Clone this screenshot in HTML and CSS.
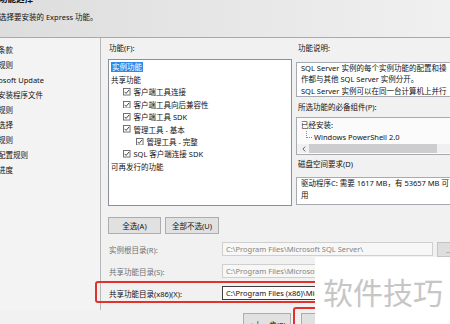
FILE: index.html
```html
<!DOCTYPE html>
<html lang="zh-CN">
<head>
<meta charset="utf-8">
<title>功能选择</title>
<link rel="stylesheet" href="styles.css">
</head>
<body>
<div class="window">
  <header class="head">
    <div class="title">功能选择</div>
    <div class="subtitle">选择要安装的 Express 功能。</div>
  </header>
  <div class="main">
    <nav class="steps">
      <div class="step">许可条款</div>
      <div class="step">全局规则</div>
      <div class="step">Microsoft Update</div>
      <div class="step">安装安装程序文件</div>
      <div class="step">安装规则</div>
      <div class="step">功能选择</div>
      <div class="step">功能规则</div>
      <div class="step">功能配置规则</div>
      <div class="step">安装进度</div>
    </nav>
    <section class="content">
      <div class="panes">
        <div class="features">
          <div class="label">功能(F):</div>
          <div class="tree">
            <div class="row l0"><span class="sel">实例功能</span></div>
            <div class="row l0">共享功能</div>
            <div class="row l1"><svg class="cb" viewBox="0 0 8 8"><rect x="0.5" y="0.5" width="7" height="7" fill="#fff" stroke="#6a6a6a"/><path d="M1.7 4.1 L3.3 5.8 L6.4 2.1" fill="none" stroke="#222" stroke-width="0.9"/></svg>客户端工具连接</div>
            <div class="row l1"><svg class="cb" viewBox="0 0 8 8"><rect x="0.5" y="0.5" width="7" height="7" fill="#fff" stroke="#6a6a6a"/><path d="M1.7 4.1 L3.3 5.8 L6.4 2.1" fill="none" stroke="#222" stroke-width="0.9"/></svg>客户端工具向后兼容性</div>
            <div class="row l1"><svg class="cb" viewBox="0 0 8 8"><rect x="0.5" y="0.5" width="7" height="7" fill="#fff" stroke="#6a6a6a"/><path d="M1.7 4.1 L3.3 5.8 L6.4 2.1" fill="none" stroke="#222" stroke-width="0.9"/></svg>客户端工具 SDK</div>
            <div class="row l1"><svg class="cb" viewBox="0 0 8 8"><rect x="0.5" y="0.5" width="7" height="7" fill="#fff" stroke="#6a6a6a"/><path d="M1.7 4.1 L3.3 5.8 L6.4 2.1" fill="none" stroke="#222" stroke-width="0.9"/></svg>管理工具 - 基本</div>
            <div class="row l2"><svg class="cb" viewBox="0 0 8 8"><rect x="0.5" y="0.5" width="7" height="7" fill="#fff" stroke="#6a6a6a"/><path d="M1.7 4.1 L3.3 5.8 L6.4 2.1" fill="none" stroke="#222" stroke-width="0.9"/></svg>管理工具 - 完整</div>
            <div class="row l1"><svg class="cb" viewBox="0 0 8 8"><rect x="0.5" y="0.5" width="7" height="7" fill="#fff" stroke="#6a6a6a"/><path d="M1.7 4.1 L3.3 5.8 L6.4 2.1" fill="none" stroke="#222" stroke-width="0.9"/></svg>SQL 客户端连接 SDK</div>
            <div class="row l0">可再发行的功能</div>
          </div>
        </div>
        <div class="details">
          <div class="label">功能说明:</div>
          <div class="box desc">SQL Server 实例的每个实例功能的配置和操<br>作都与其他 SQL Server 实例分开。<br>SQL Server 实例可以在同一台计算机上并行</div>
          <div class="label gap">所选功能的必备组件(P):</div>
          <div class="box prereq">
            <div class="pline">已经安装:</div>
            <div class="pline child"><span class="conn"></span>Windows PowerShell 2.0</div>
            <div class="hscroll">
              <svg class="arrow" viewBox="0 0 4 6"><path d="M3.2 0.6 L0.9 3 L3.2 5.4" fill="none" stroke="#555" stroke-width="0.9"/></svg>
              <span class="thumb"></span>
            </div>
          </div>
          <div class="label gap2">磁盘空间要求(D)</div>
          <div class="box disk">驱动程序C: 需要 1617 MB，有 53657 MB 可<br>用</div>
        </div>
      </div>
      <div class="btnrow">
        <button class="btn b1">全选(A)</button>
        <button class="btn b2">全部不选(U)</button>
      </div>
      <div class="dirs">
        <div class="dlabel off">实例根目录(R):</div>
        <div class="input off">C:\Program Files\Microsoft SQL Server\</div>
        <button class="browse">...</button>
        <div class="dlabel off">共享功能目录(S):</div>
        <div class="input off">C:\Program Files\Microsoft SQL Server\</div>
        <button class="browse">...</button>
        <div class="dlabel">共享功能目录(x86)(X):</div>
        <div class="input on">C:\Program Files (x86)\Microsoft SQL Server\</div>
        <button class="browse">...</button>
      </div>
    </section>
  </div>
  <footer class="foot">
    <button class="fbtn back">&lt; 上一步(B)</button>
    <button class="fbtn next">下一步(N) &gt;</button>
    <button class="fbtn">取消</button>
  </footer>
  <div class="mark mark1"></div>
  <div class="mark mark2"></div>
  <div class="watermark">软件技巧</div>
</div>
</body>
</html>
```

FILE: styles.css
```css
html, body {
  margin: 0;
  padding: 0;
}
body {
  background: #f0f0f0;
  font-family: "Noto Sans", "Noto Sans CJK SC", sans-serif;
  font-size: 7.5px;
  color: #111;
}
.window {
  position: relative;
  width: 450px;
  height: 324px;
  overflow: hidden;
  background: #f1f1f1;
}
.head {
  height: 37px;
  box-sizing: content-box;
  border-bottom: 1px solid #a9a9a9;
  background: linear-gradient(to right, #dddddd, #f0f0f0);
  overflow: hidden;
  padding-left: 0;
}
.title {
  font-weight: bold;
  font-size: 8.5px;
  line-height: 10px;
  margin-top: -6px;
  margin-left: -1px;
}
.subtitle {
  line-height: 12px;
  margin-top: 7px;
  margin-left: -1px;
}
.main {
  display: flex;
  height: 272px;
}
.steps {
  width: 101px;
  flex: none;
  box-sizing: border-box;
  border-right: 1px solid #b8b8b8;
  padding-top: 5px;
  overflow: hidden;
  background: #f3f3f3;
}
.step {
  line-height: 15px;
  white-space: nowrap;
  margin-left: -17px;
}
.content {
  flex: 1;
  min-width: 0;
  padding: 4px 0 0 7px;
  overflow: hidden;
}
.panes {
  display: flex;
  align-items: flex-start;
  gap: 4px;
}
.features {
  width: 184px;
  flex: none;
}
.label {
  line-height: 12px;
  padding-left: 1px;
  white-space: nowrap;
}
.features .label {
  margin-bottom: 5px;
}
.tree {
  height: 147px;
  box-sizing: border-box;
  border: 1px solid #8a8f98;
  background: #fff;
  padding-top: 1px;
}
.row {
  display: flex;
  align-items: center;
  height: 12.4px;
  white-space: nowrap;
}
.l0 { padding-left: 2px; }
.l1 { padding-left: 14px; }
.l2 { padding-left: 27px; }
.cb {
  width: 7.5px;
  height: 7.5px;
  margin-right: 3px;
  flex: none;
}
.sel {
  background: #2d8ae8;
  color: #fff;
  line-height: 10px;
  padding: 0 1px;
}
.details {
  width: 170px;
  flex: none;
}
.details .label {
  margin-bottom: 8px;
  padding-left: 2px;
}
.details .label.gap {
  margin-top: 4px;
  margin-bottom: 4px;
}
.details .label.gap2 {
  margin-top: 3px;
  margin-bottom: 7px;
}
.box {
  box-sizing: border-box;
  border: 1px solid #a7aab0;
  background: #fff;
  white-space: nowrap;
  overflow: hidden;
}
.desc {
  height: 35px;
  line-height: 11.4px;
  padding-left: 4px;
}
.prereq {
  height: 38px;
  padding-top: 1px;
  background: #fbfbfb;
}
.pline {
  line-height: 12px;
  padding-left: 4px;
  display: flex;
  align-items: flex-start;
}
.child {
  padding-left: 9px;
}
.conn {
  width: 5px;
  height: 6px;
  border-left: 1px dotted #8a8a8a;
  border-bottom: 1px dotted #8a8a8a;
  margin-top: 0;
  margin-right: 2px;
  flex: none;
}
.hscroll {
  display: flex;
  align-items: center;
  height: 9px;
  margin-top: 1px;
  background: #f0f0f0;
  padding-left: 5px;
}
.arrow {
  width: 4px;
  height: 6px;
  flex: none;
}
.thumb {
  width: 128px;
  height: 9px;
  margin-left: 3px;
  background: #cdcdcd;
  flex: none;
}
.disk {
  height: 28px;
  line-height: 11.5px;
  padding-left: 4px;
}
.btnrow {
  display: flex;
  gap: 4px;
  margin-top: 11px;
}
.btn {
  height: 17px;
  box-sizing: border-box;
  border: 1px solid #adadad;
  background: #e1e1e1;
  font: inherit;
  color: #111;
  padding: 0;
}
.b1 { width: 53px; }
.b2 { width: 54px; }
.dirs {
  display: grid;
  grid-template-columns: 110px 211px 24px;
  grid-auto-rows: 14px;
  column-gap: 4px;
  row-gap: 8px;
  margin-top: 8px;
  align-items: center;
}
.dlabel {
  padding-left: 1px;
  white-space: nowrap;
}
.dlabel.off {
  color: #707070;
}
.input {
  height: 14px;
  box-sizing: border-box;
  line-height: 12px;
  padding-left: 3px;
  white-space: nowrap;
  overflow: hidden;
}
.input.off {
  border: 1px solid #cfcfcf;
  background: #f7f7f7;
  color: #858585;
}
.input.on {
  border: 1px solid #3c3c3c;
  background: #fff;
  color: #111;
}
.browse {
  height: 15px;
  box-sizing: border-box;
  border: 1px solid #c4c4c4;
  background: #dedede;
  color: #888;
  font: inherit;
  padding: 0;
  align-self: start;
}
.foot {
  display: flex;
  gap: 10px;
  padding: 3px 0 0 243px;
}
.fbtn {
  height: 22px;
  box-sizing: border-box;
  border: 1px solid #adadad;
  background: #e1e1e1;
  font: inherit;
  color: #111;
  padding: 0;
  flex: none;
}
.back { width: 48px; }
.next { width: 75px; }
.fbtn:last-child { width: 75px; }
.mark {
  position: absolute;
  box-sizing: border-box;
  border: 2px solid #e2322b;
  border-radius: 3px;
}
.mark1 {
  left: 95px;
  top: 281px;
  width: 350px;
  height: 22px;
}
.mark2 {
  left: 293px;
  top: 307px;
  width: 100px;
  height: 40px;
}
.watermark {
  position: absolute;
  left: 315px;
  top: 257px;
  right: 0;
  bottom: 0;
  background: #fff;
  color: #c6c6c6;
  font-family: "Noto Sans CJK SC", sans-serif;
  font-size: 30px;
  line-height: 30px;
  padding: 19px 0 0 8px;
  white-space: nowrap;
}
```
